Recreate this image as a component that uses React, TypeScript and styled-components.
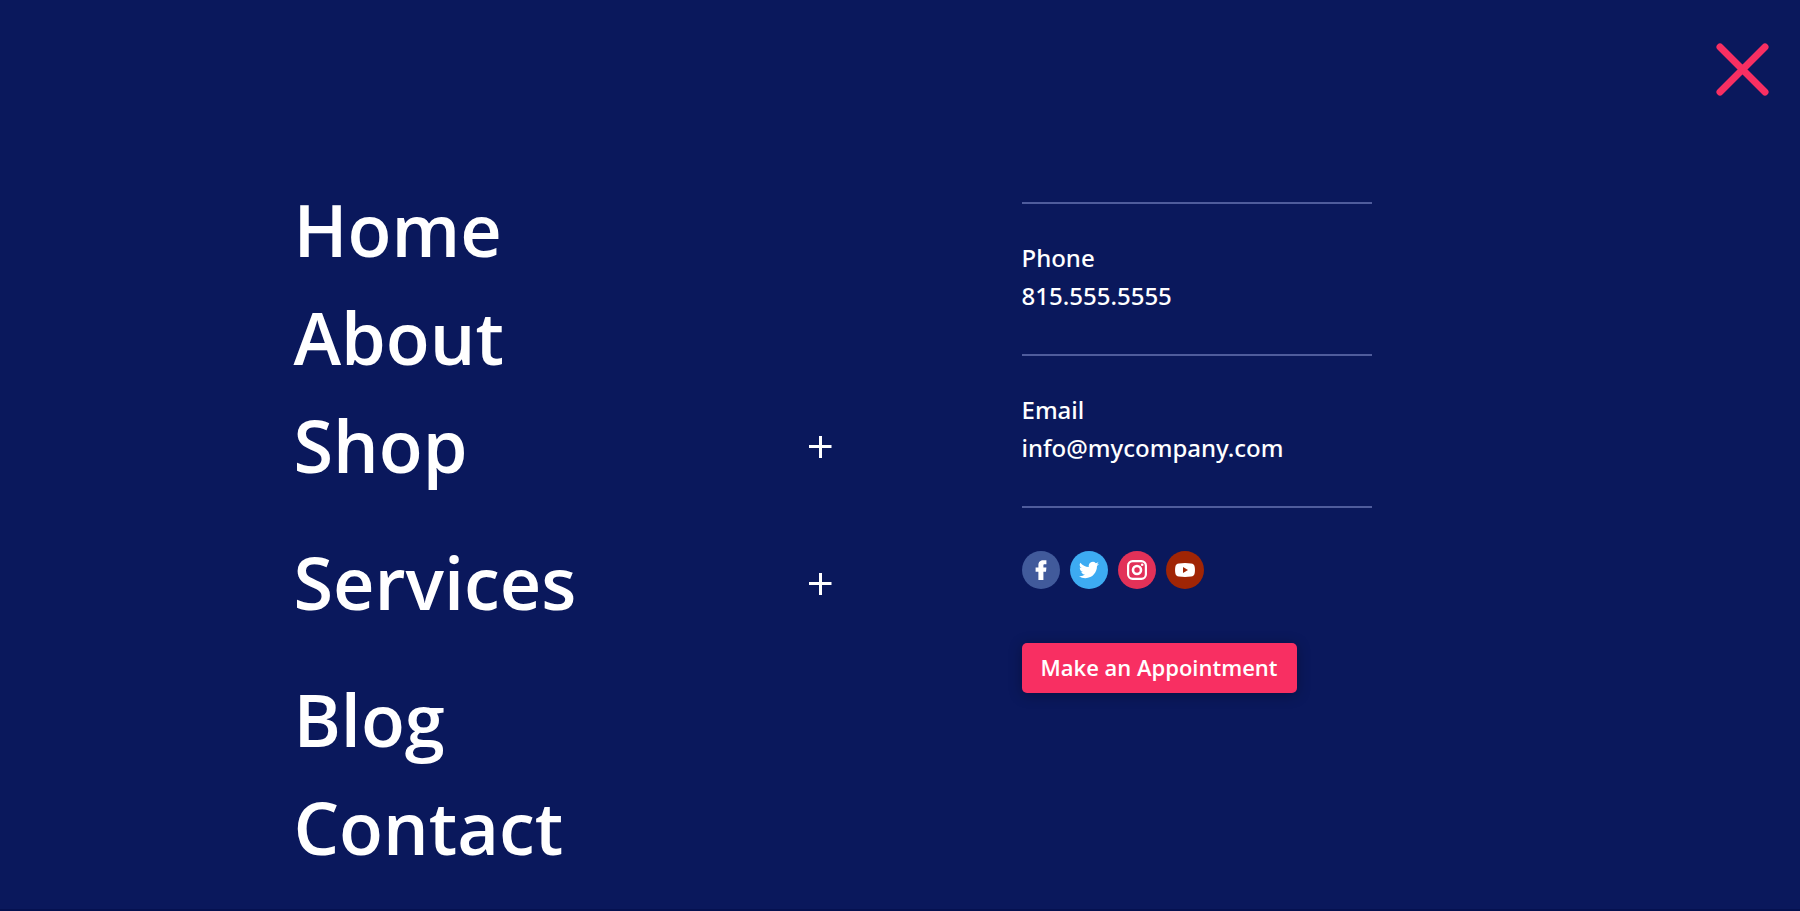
import React from "react";
import styled, { createGlobalStyle } from "styled-components";

const Global = createGlobalStyle`
  *, *::before, *::after { box-sizing: border-box; }
  html, body { margin: 0; background: #0a185c; }
  body { font-family: "Open Sans", "Noto Sans", sans-serif; color: #fff; }
  a { color: inherit; text-decoration: none; }
`;

const Page = styled.div`
  min-height: 100vh;
  background: #0a185c;
  border-bottom: 2px solid #051150;
`;

const TopBar = styled.header`
  display: flex;
  justify-content: flex-end;
  padding: 42px 30px 0;
`;

const CloseButton = styled.button`
  padding: 0;
  border: 0;
  background: none;
  cursor: pointer;

  svg { display: block; }
`;

const Content = styled.main`
  display: grid;
  grid-template-columns: 540fr 350fr;
  column-gap: 188px;
  padding: 78px 23.8% 0 16.3%;
`;

const MenuList = styled.ul`
  list-style: none;
  margin: 0;
  padding: 0;
`;

const MenuItem = styled.li<{ $expandable?: boolean }>`
  display: flex;
  align-items: center;
  justify-content: space-between;
  height: 108px;
  margin-bottom: ${(p) => (p.$expandable ? 29 : 0)}px;
`;

const MenuLink = styled.a`
  font-size: 72px;
  line-height: 108px;
  font-weight: 600;
`;

const ExpandButton = styled.button`
  padding: 4px 2px 0;
  border: 0;
  background: none;
  cursor: pointer;

  svg { display: block; }
`;

const Aside = styled.aside`
  padding-top: 27px;
`;

const Block = styled.section`
  border-top: 2px solid #4f5c9c;
  height: 152px;
  padding-top: 35px;
`;

const Line = styled.p`
  margin: 0;
  font-family: "Noto Sans", "Open Sans", sans-serif;
  font-size: 24px;
  line-height: 38px;
  font-weight: 500;
`;

const Socials = styled.nav`
  display: flex;
  gap: 10px;
  border-top: 2px solid #4f5c9c;
  padding-top: 43px;
`;

const SocialLink = styled.a<{ $color: string }>`
  display: flex;
  align-items: center;
  justify-content: center;
  width: 38px;
  height: 38px;
  border-radius: 50%;
  background: ${(p) => p.$color};
`;

const Appointment = styled.button`
  height: 50px;
  margin-top: 54px;
  padding: 0 19px 2px;
  border: 0;
  border-radius: 5px;
  background: #f82f62;
  color: #fff;
  font: 600 22px/48px "Open Sans", "Noto Sans", sans-serif;
  box-shadow: 0 2px 14px rgba(0, 0, 0, 0.3);
  cursor: pointer;
`;

const items = [
  { label: "Home" },
  { label: "About" },
  { label: "Shop", expandable: true },
  { label: "Services", expandable: true },
  { label: "Blog" },
  { label: "Contact" },
];

const CloseIcon = () => (
  <svg width="55" height="55" viewBox="0 0 55 55" fill="none" stroke="#f82f62" strokeWidth="7" strokeLinecap="round">
    <path d="M5 5L50 50M50 5L5 50" />
  </svg>
);

const PlusIcon = () => (
  <svg width="24" height="24" viewBox="0 0 24 24" stroke="#fff" strokeWidth="3">
    <path d="M12.5 1V23M1 11.5H23.5" />
  </svg>
);

const FacebookIcon = () => (
  <svg width="22" height="22" viewBox="0 0 22 22" fill="#fff">
    <path d="M8.4 21V12.8H5.6V8.4H8.4V6.2C8.4 2.6 10.4 1.2 13.4 1.2H16.4V5.2H14.8C13.6 5.2 13.4 5.6 13.4 6.6V8.4H16.4L16 12.8H13.4V21Z" />
  </svg>
);

const TwitterIcon = () => (
  <svg width="20" height="20" viewBox="0 0 24 24" fill="#fff">
    <path d="M23.95 4.57a10 10 0 0 1-2.82.77 4.96 4.96 0 0 0 2.16-2.72c-.95.55-2 .95-3.13 1.18a4.92 4.92 0 0 0-8.38 4.48C7.69 8.1 4.07 6.13 1.64 3.16a4.93 4.93 0 0 0 1.52 6.57 4.9 4.9 0 0 1-2.23-.61v.06a4.92 4.92 0 0 0 3.95 4.83 5 5 0 0 1-2.21.08 4.94 4.94 0 0 0 4.6 3.42A9.87 9.87 0 0 1 0 19.54a13.99 13.99 0 0 0 7.56 2.21c9.05 0 14-7.5 14-13.98 0-.21 0-.42-.02-.63a9.94 9.94 0 0 0 2.41-2.57z" />
  </svg>
);

const InstagramIcon = () => (
  <svg width="20" height="20" viewBox="0 0 20 20" fill="none" stroke="#fff" strokeWidth="2.2">
    <rect x="1.1" y="1.1" width="17.8" height="17.8" rx="4.6" />
    <circle cx="10" cy="10" r="4" strokeWidth="2.6" />
    <circle cx="15.2" cy="4.8" r="1.3" fill="#fff" stroke="none" />
  </svg>
);

const YoutubeIcon = () => (
  <svg width="20" height="14" viewBox="0 0 20 14">
    <path d="M4 .5Q10-.3 16 .5Q19.3.8 19.7 4Q20.2 7 19.7 10Q19.3 13.2 16 13.5Q10 14.3 4 13.5Q.7 13.2.3 10Q-.2 7 .3 4Q.7.8 4 .5Z" fill="#fff" />
    <path d="M8 4L13 7L8 10Z" fill="#a02505" />
  </svg>
);

const socials = [
  { name: "Facebook", color: "#415a9b", Icon: FacebookIcon },
  { name: "Twitter", color: "#3dabf2", Icon: TwitterIcon },
  { name: "Instagram", color: "#e23158", Icon: InstagramIcon },
  { name: "YouTube", color: "#a02505", Icon: YoutubeIcon },
];

export default function App() {
  return (
    <Page>
      <Global />
      <TopBar>
        <CloseButton type="button" aria-label="Close menu">
          <CloseIcon />
        </CloseButton>
      </TopBar>
      <Content>
        <nav aria-label="Main">
          <MenuList>
            {items.map(({ label, expandable }) => (
              <MenuItem key={label} $expandable={expandable}>
                <MenuLink href="#">{label}</MenuLink>
                {expandable && (
                  <ExpandButton type="button" aria-label={`Expand ${label}`}>
                    <PlusIcon />
                  </ExpandButton>
                )}
              </MenuItem>
            ))}
          </MenuList>
        </nav>
        <Aside>
          <Block>
            <Line>Phone</Line>
            <Line><a href="tel:8155555555">815.555.5555</a></Line>
          </Block>
          <Block>
            <Line>Email</Line>
            <Line><a href="mailto:info@mycompany.com">info@mycompany.com</a></Line>
          </Block>
          <Socials aria-label="Social media">
            {socials.map(({ name, color, Icon }) => (
              <SocialLink key={name} href="#" $color={color} aria-label={name}>
                <Icon />
              </SocialLink>
            ))}
          </Socials>
          <Appointment type="button">Make an Appointment</Appointment>
        </Aside>
      </Content>
    </Page>
  );
}
